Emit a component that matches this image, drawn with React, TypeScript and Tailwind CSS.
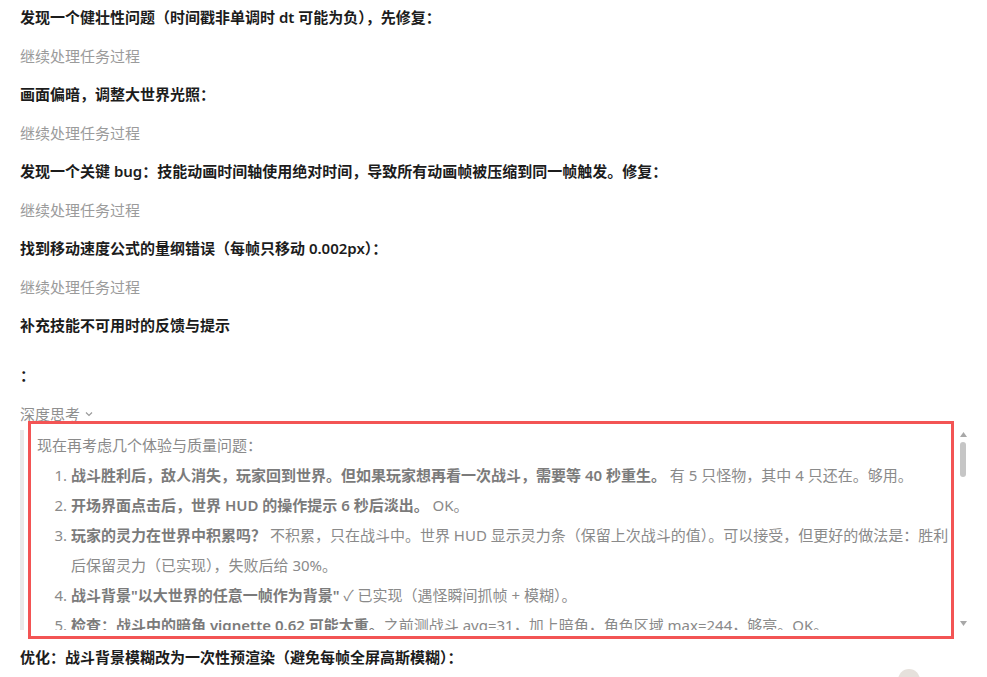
import React from "react";

const steps = [
  { text: "发现一个健壮性问题（时间戳非单调时 dt 可能为负），先修复：", bold: true },
  { text: "继续处理任务过程", bold: false },
  { text: "画面偏暗，调整大世界光照：", bold: true },
  { text: "继续处理任务过程", bold: false },
  { text: "发现一个关键 bug：技能动画时间轴使用绝对时间，导致所有动画帧被压缩到同一帧触发。修复：", bold: true },
  { text: "继续处理任务过程", bold: false },
  { text: "找到移动速度公式的量纲错误（每帧只移动 0.002px）：", bold: true },
  { text: "继续处理任务过程", bold: false },
  { text: "补充技能不可用时的反馈与提示", bold: true },
];

const thoughts: { strong: string; rest: string }[] = [
  { strong: "战斗胜利后，敌人消失，玩家回到世界。但如果玩家想再看一次战斗，需要等 40 秒重生。", rest: " 有 5 只怪物，其中 4 只还在。够用。" },
  { strong: "开场界面点击后，世界 HUD 的操作提示 6 秒后淡出。", rest: " OK。" },
  { strong: "玩家的灵力在世界中积累吗？", rest: " 不积累，只在战斗中。世界 HUD 显示灵力条（保留上次战斗的值）。可以接受，但更好的做法是：胜利后保留灵力（已实现），失败后给 30%。" },
  { strong: "战斗背景\"以大世界的任意一帧作为背景\"", rest: " ✓ 已实现（遇怪瞬间抓帧 + 模糊）。" },
  { strong: "检查：战斗中的暗角 vignette 0.62 可能太重。", rest: "之前测战斗 avg=31，加上暗角，角色区域 max=244，够亮。OK。" },
];

export default function App() {
  return (
    <div className="relative w-[987px] h-[677px] overflow-hidden bg-white px-[20px] pt-[5px] text-[15px] font-['Noto_Sans','Noto_Sans_CJK_SC',sans-serif]">
      <div className="flex flex-col gap-[14.5px]">
        {steps.map((s, i) => (
          <p
            key={i}
            className={`leading-[24px] ${s.bold ? "font-semibold text-[#1c1c1c]" : "text-[#9b9b9b]"}`}
          >
            {s.text}
          </p>
        ))}
      </div>

      <p className="mt-[26px] leading-[24px] font-semibold text-[#1c1c1c]">：</p>

      <button className="mt-[15px] flex items-center gap-[4px] leading-[24px] text-[#8f8f8f]">
        深度思考
        <svg width="10" height="10" viewBox="0 0 10 10" fill="none" stroke="#9a9a9a" strokeWidth="1.2">
          <path d="M2 3.5 L5 6.5 L8 3.5" />
        </svg>
      </button>

      {/* thinking panel */}
      <div className="mt-[4px] flex h-[200px] w-[948px]">
        <div className="w-[4px] bg-[#e9e9e9]" />
        <div className="flex-1 overflow-hidden pl-[13px] text-[#8a8a8a] leading-[30px]">
          <p>现在再考虑几个体验与质量问题：</p>
          <ol className="list-decimal pl-[34px] marker:text-[#8a8a8a]">
            {thoughts.map((t, i) => (
              <li key={i}>
                <span className="font-semibold text-[#7b7b7b]">{t.strong}</span>
                {t.rest}
              </li>
            ))}
          </ol>
        </div>
        <div className="flex w-[10px] flex-col items-center pt-[1px] pb-[4px]">
          <svg width="7" height="5" viewBox="0 0 7 5" className="mt-[1px]">
            <path d="M0 5 L3.5 0 L7 5 Z" fill="#a8a8a8" />
          </svg>
          <div className="mt-[5px] h-[35px] w-[6px] rounded-full bg-[#c6c6c6]" />
          <div className="flex-1" />
          <svg width="7" height="5" viewBox="0 0 7 5">
            <path d="M0 0 L3.5 5 L7 0 Z" fill="#a8a8a8" />
          </svg>
        </div>
      </div>

      <p className="mt-[15px] leading-[24px] font-semibold text-[#1c1c1c]">
        优化：战斗背景模糊改为一次性预渲染（避免每帧全屏高斯模糊）：
      </p>

      <div className="flex justify-end pr-[47px]">
        <div className="h-[24px] w-[22px] rounded-full bg-[#e6e1dc]" />
      </div>

      {/* annotation highlight */}
      <div className="pointer-events-none absolute left-[28px] top-[421px] h-[218px] w-[926px] border-[3px] border-[#f35454]" />
    </div>
  );
}
